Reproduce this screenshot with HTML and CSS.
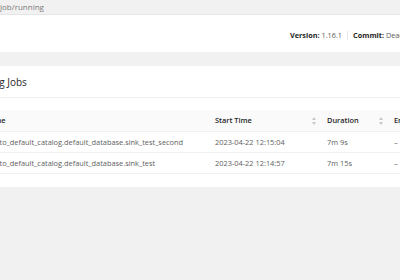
FILE: index.html
```html
<!DOCTYPE html>
<html lang="en">
<head>
  <meta charset="UTF-8">
  <title>Apache Flink Web Dashboard</title>
  <link rel="stylesheet" href="styles.css">
</head>
<body>
  <div class="urlbar">job/running</div>

  <header class="topnav">
    <div class="build">
      <span><b>Version:</b> 1.16.1</span>
      <span class="sep"></span>
      <span><b>Commit:</b> DeadD0d0 @ 2023-01-26T01:28:05+01:00</span>
    </div>
  </header>

  <main class="content">
    <section class="card">
      <div class="card-head">Running Jobs</div>
      <div class="card-body">
        <div class="jobs">
          <div class="row head">
            <div>Job Name</div>
            <div>Start Time <svg class="sort" viewBox="0 0 4 8"><path d="M2 0 L4 3 L0 3 Z"/><path d="M0 5 L4 5 L2 8 Z"/></svg></div>
            <div>Duration <svg class="sort" viewBox="0 0 4 8"><path d="M2 0 L4 3 L0 3 Z"/><path d="M0 5 L4 5 L2 8 Z"/></svg></div>
            <div>End Time</div>
          </div>
          <div class="row">
            <div>insert-into_default_catalog.default_database.sink_test_second</div>
            <div>2023-04-22 12:15:04</div>
            <div>7m 9s</div>
            <div>–</div>
          </div>
          <div class="row">
            <div>insert-into_default_catalog.default_database.sink_test</div>
            <div>2023-04-22 12:14:57</div>
            <div>7m 15s</div>
            <div>–</div>
          </div>
        </div>
      </div>
    </section>
  </main>
</body>
</html>
```

FILE: styles.css
```css
:root {
  --bg: #f1f1f1;
  --white: #ffffff;
  --text: #5e5e5e;
  --heading: #262626;
  --line: #f0f0f0;
}
* {
  box-sizing: border-box;
  margin: 0;
  padding: 0;
}
body {
  width: 400px;
  height: 280px;
  overflow: hidden;
  background-color: var(--bg);
  font-family: 'Open Sans', sans-serif;
  color: var(--text);
}
.urlbar {
  height: 14px;
  line-height: 14px;
  font-size: 8px;
  color: #7a7a7a;
  white-space: nowrap;
}
.topnav {
  height: 38px;
  background-color: var(--white);
  border-top: 1px solid #e6e6e6;
  display: flex;
  align-items: center;
  padding-top: 3px;
}
.build {
  display: flex;
  align-items: center;
  padding-left: 290px;
  font-size: 7.3px;
  white-space: nowrap;
}
.build b {
  color: var(--heading);
  font-weight: 700;
}
.sep {
  width: 1px;
  height: 9px;
  background-color: #e8e8e8;
  margin: 0 5px;
}
.content {
  padding-top: 14px;
}
.card {
  background-color: var(--white);
}
.card-head {
  height: 32px;
  display: flex;
  align-items: center;
  margin-left: -34px;
  font-size: 10px;
  font-weight: 500;
  color: var(--heading);
  border-bottom: 1px solid var(--line);
  white-space: nowrap;
}
.card-body {
  padding: 12px 0 13px;
}
.jobs {
  margin-left: -37px;
  font-size: 7.4px;
}
.row {
  display: grid;
  grid-template-columns: 244px 112px 67px 140px;
  border-bottom: 1px solid var(--line);
}
.row > div {
  height: 20px;
  line-height: 20px;
  padding: 0 8px;
  white-space: nowrap;
  overflow: hidden;
}
.head {
  background-color: #fafafa;
  color: var(--heading);
  font-weight: 600;
}
.head > div {
  height: 21px;
  line-height: 21px;
  display: flex;
  justify-content: space-between;
  align-items: center;
  padding-right: 3px;
}
.sort {
  width: 4px;
  height: 8px;
  fill: #c8c8c8;
}
```
